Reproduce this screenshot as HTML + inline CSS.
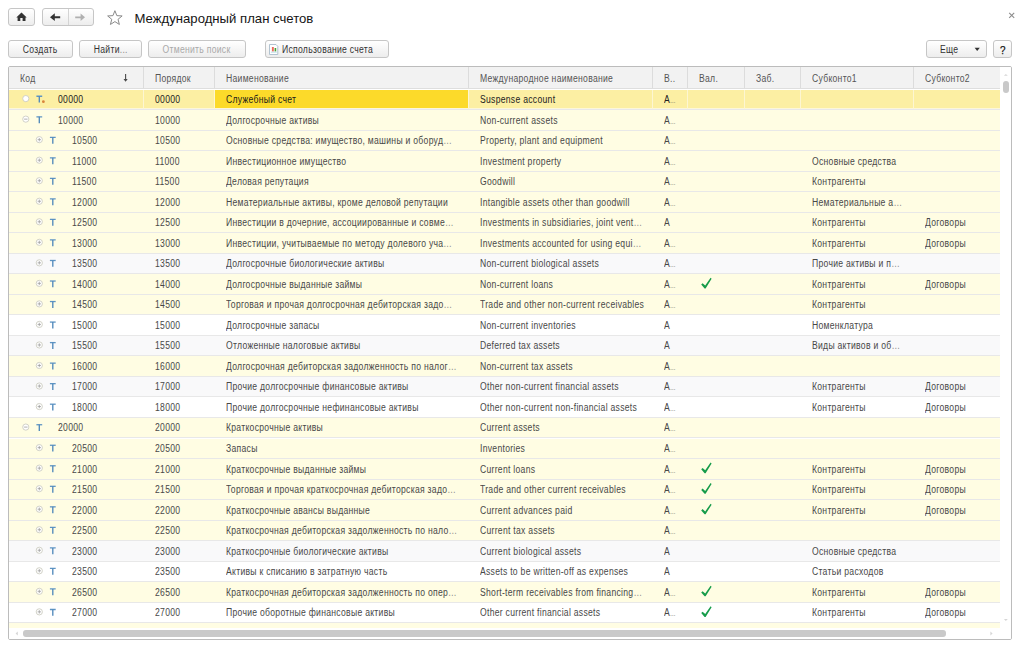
<!DOCTYPE html><html><head><meta charset="utf-8"><style>
*{box-sizing:border-box}
html,body{margin:0;padding:0}
body{width:1024px;height:648px;overflow:hidden;position:relative;background:#fff;font-family:"Liberation Sans",sans-serif;}
.a{position:absolute}
.t{position:absolute;white-space:nowrap;font-family:"Liberation Sans",sans-serif}
.t span{display:inline-block;transform:scaleX(0.86);transform-origin:0 0;letter-spacing:0.33px}
.e{font-style:normal;color:#8a8a8a}
.e2{font-style:normal;color:#555;font-size:6.5px;letter-spacing:-0.3px}
.btn{position:absolute;border:1px solid #c6c6c6;border-radius:3px;background:linear-gradient(#ffffff,#ededed);}
svg{position:absolute;left:0;top:0;overflow:visible}
</style></head><body>

<div class="btn" style="left:8px;top:8px;width:27px;height:18px"></div>
<div class="btn" style="left:42px;top:8px;width:52px;height:18px"></div>
<div class="a" style="left:68px;top:9px;width:1px;height:16px;background:#d4d4d4"></div>
<div class="btn" style="left:8px;top:40px;width:65px;height:18px"></div>
<div class="btn" style="left:79px;top:40px;width:63px;height:18px"></div>
<div class="btn" style="left:148px;top:40px;width:98px;height:18px"></div>
<div class="btn" style="left:265px;top:40px;width:124px;height:18px"></div>
<div class="btn" style="left:926px;top:40px;width:61px;height:18px"></div>
<div class="btn" style="left:993px;top:40px;width:19px;height:18px"></div>
<div class="t" style="left:8px;top:40.8px;width:65px;height:18px;line-height:18px;color:#333;font-size:10px;text-align:center"><span style="transform-origin:50% 0">Создать</span></div>
<div class="t" style="left:79px;top:40.8px;width:63px;height:18px;line-height:18px;color:#333;font-size:10px;text-align:center"><span style="transform-origin:50% 0">Найти<em class="e">...</em></span></div>
<div class="t" style="left:148px;top:40.8px;width:98px;height:18px;line-height:18px;color:#a9a9a9;font-size:10px;text-align:center"><span style="transform-origin:50% 0">Отменить поиск</span></div>
<div class="t" style="left:282.00px;top:40.80px;height:18.00px;line-height:18.00px;color:#333;font-size:10px;"><span>Использование счета</span></div>
<div class="t" style="left:939.50px;top:40.80px;height:18.00px;line-height:18.00px;color:#333;font-size:10px;"><span>Еще</span></div>
<div class="t" style="left:999.60px;top:40.50px;height:18.00px;line-height:18.00px;color:#111;font-size:11.5px;-webkit-text-stroke:0.25px #111"><span>?</span></div>
<svg width="1024" height="648"><path d="M16.3 17.6 L21.5 12.5 L26.7 17.6 L25.5 17.6 L25.5 21 L22.6 21 L22.6 18 L20.3 18 L20.3 21 L17.6 21 L17.6 17.6 Z" fill="#333"/><path d="M50 17.2 L54.8 13.3 L54.8 16.2 L60.2 16.2 L60.2 18.2 L54.8 18.2 L54.8 21 Z" fill="#333"/><path d="M85 17.3 L80.6 13.6 L80.6 16.4 L75.2 16.4 L75.2 18.2 L80.6 18.2 L80.6 21 Z" fill="#b0b0b0"/><polygon points="114.90,10.70 116.84,15.63 122.13,15.95 118.04,19.32 119.37,24.45 114.90,21.60 110.43,24.45 111.76,19.32 107.67,15.95 112.96,15.63" fill="none" stroke="#8a8a8a" stroke-width="1"/><path d="M1009.2 12.8 L1014.2 17.9 M1014.2 12.8 L1009.2 17.9" stroke="#8c8c8c" stroke-width="1.1"/><path d="M974.6 47.8 L979.8 47.8 L977.2 50.9 Z" fill="#333"/><path d="M269.5 44.5 L276 44.5 L277.8 46.3 L277.8 54.5 L269.5 54.5 Z" fill="#fff" stroke="#a9bccb" stroke-width="0.9"/><rect x="271.9" y="47" width="1.9" height="4.5" fill="#ec6a5c"/><rect x="274.6" y="48" width="1.6" height="3.5" fill="#4aa133"/><rect x="270.8" y="51.7" width="6" height="1" fill="#bfe0ea"/></svg>
<div class="t" style="left:134.5px;top:8.6px;height:20px;line-height:20px;color:#151515;font-size:13.15px"><span style="transform:none;letter-spacing:0">Международный план счетов</span></div>
<div class="a" style="left:8px;top:66px;width:1004px;height:574px;border:1px solid #bcbcbc;border-radius:2px;overflow:hidden;background:#fff">
<div class="a" style="left:0;top:0;width:991px;height:21px;background:#f2f2f2"></div>
<div class="a" style="left:0;top:21px;width:991px;height:1px;background:#dedede"></div>
<div class="a" style="left:134px;top:0;width:1px;height:21px;background:#dcdcdc"></div>
<div class="a" style="left:205px;top:0;width:1px;height:21px;background:#dcdcdc"></div>
<div class="a" style="left:459px;top:0;width:1px;height:21px;background:#dcdcdc"></div>
<div class="a" style="left:643px;top:0;width:1px;height:21px;background:#dcdcdc"></div>
<div class="a" style="left:678px;top:0;width:1px;height:21px;background:#dcdcdc"></div>
<div class="a" style="left:735px;top:0;width:1px;height:21px;background:#dcdcdc"></div>
<div class="a" style="left:791px;top:0;width:1px;height:21px;background:#dcdcdc"></div>
<div class="a" style="left:904px;top:0;width:1px;height:21px;background:#dcdcdc"></div>
<div class="t" style="left:11.00px;top:0.50px;height:21.00px;line-height:21.00px;color:#555555;font-size:10px;"><span>Код</span></div>
<div class="t" style="left:145.50px;top:0.50px;height:21.00px;line-height:21.00px;color:#555555;font-size:10px;"><span>Порядок</span></div>
<div class="t" style="left:216.50px;top:0.50px;height:21.00px;line-height:21.00px;color:#555555;font-size:10px;"><span>Наименование</span></div>
<div class="t" style="left:470.50px;top:0.50px;height:21.00px;line-height:21.00px;color:#555555;font-size:10px;"><span>Международное наименование</span></div>
<div class="t" style="left:654.50px;top:0.50px;height:21.00px;line-height:21.00px;color:#555555;font-size:10px;"><span>В..</span></div>
<div class="t" style="left:689.50px;top:0.50px;height:21.00px;line-height:21.00px;color:#555555;font-size:10px;"><span>Вал.</span></div>
<div class="t" style="left:746.50px;top:0.50px;height:21.00px;line-height:21.00px;color:#555555;font-size:10px;"><span>Заб.</span></div>
<div class="t" style="left:802.50px;top:0.50px;height:21.00px;line-height:21.00px;color:#555555;font-size:10px;"><span>Субконто1</span></div>
<div class="t" style="left:915.50px;top:0.50px;height:21.00px;line-height:21.00px;color:#555555;font-size:10px;"><span>Субконто2</span></div>
<svg width="1024" height="648"><rect x="116.05" y="7" width="1.1" height="5.3" fill="#4a4a4a"/><path d="M114.5 12.0 L118.7 12.0 L116.6 14.799999999999997 Z" fill="#4a4a4a"/></svg>
<div class="a" style="left:0;top:22.50px;width:991px;height:20.53px;background:#fcefa3;border-bottom:1px solid #e8e8e8"></div>
<div class="a" style="left:0;top:40.83px;width:991px;height:1.2px;background:#fdf7d8"></div>
<div class="a" style="left:205.60px;top:22.50px;width:253.40px;height:18.33px;background:#fcda2a"></div>
<div class="a" style="left:134px;top:22.50px;width:1px;height:19.53px;background:#fdf6d2"></div>
<div class="a" style="left:205px;top:22.50px;width:1px;height:19.53px;background:#fdf6d2"></div>
<div class="a" style="left:459px;top:22.50px;width:1px;height:19.53px;background:#fdf6d2"></div>
<div class="a" style="left:643px;top:22.50px;width:1px;height:19.53px;background:#fdf6d2"></div>
<div class="a" style="left:678px;top:22.50px;width:1px;height:19.53px;background:#fdf6d2"></div>
<div class="a" style="left:735px;top:22.50px;width:1px;height:19.53px;background:#fdf6d2"></div>
<div class="a" style="left:791px;top:22.50px;width:1px;height:19.53px;background:#fdf6d2"></div>
<div class="a" style="left:904px;top:22.50px;width:1px;height:19.53px;background:#fdf6d2"></div>
<svg width="1024" height="648"><circle cx="16.80" cy="31.60" r="3.1" fill="#fff" stroke="#cdcdc2" stroke-width="0.9"/><path d="M27.40 29.25 L33.20 29.25" stroke="#5f95c4" stroke-width="1.3"/><path d="M30.30 29.25 L30.30 35.60" stroke="#5089bb" stroke-width="1.35"/><circle cx="34.40" cy="34.70" r="1.4" fill="#d9843c"/></svg>
<div class="t" style="left:49.30px;top:23.00px;height:20.00px;line-height:20.00px;color:#222;font-size:10px;"><span>00000</span></div>
<div class="t" style="left:146.00px;top:23.00px;height:20.00px;line-height:20.00px;color:#222;font-size:10px;"><span>00000</span></div>
<div class="t" style="left:216.50px;top:23.00px;height:20.00px;line-height:20.00px;color:#1a1a1a;font-size:10px;"><span>Служебный счет</span></div>
<div class="t" style="left:470.50px;top:23.00px;height:20.00px;line-height:20.00px;color:#222;font-size:10px;"><span>Suspense account</span></div>
<div class="t" style="left:654.50px;top:23.00px;height:20.00px;line-height:20.00px;color:#222;font-size:10px;"><span>A<em class="e2">…</em></span></div>
<div class="a" style="left:0;top:43.03px;width:991px;height:20.53px;background:#fffde3;border-bottom:1px solid #e8e8e8"></div>
<svg width="1024" height="648"><circle cx="16.80" cy="52.13" r="3.1" fill="#fff" stroke="#cdcdc2" stroke-width="0.9"/><path d="M15.10 52.13 L18.50 52.13" stroke="#9a9a9a" stroke-width="0.8"/><path d="M27.40 49.78 L33.20 49.78" stroke="#5f95c4" stroke-width="1.3"/><path d="M30.30 49.78 L30.30 56.13" stroke="#5089bb" stroke-width="1.35"/></svg>
<div class="t" style="left:49.30px;top:43.53px;height:20.00px;line-height:20.00px;color:#484848;font-size:10px;"><span>10000</span></div>
<div class="t" style="left:146.00px;top:43.53px;height:20.00px;line-height:20.00px;color:#484848;font-size:10px;"><span>10000</span></div>
<div class="t" style="left:216.50px;top:43.53px;height:20.00px;line-height:20.00px;color:#484848;font-size:10px;"><span>Долгосрочные активы</span></div>
<div class="t" style="left:470.50px;top:43.53px;height:20.00px;line-height:20.00px;color:#484848;font-size:10px;"><span>Non-current assets</span></div>
<div class="t" style="left:654.50px;top:43.53px;height:20.00px;line-height:20.00px;color:#484848;font-size:10px;"><span>A<em class="e2">…</em></span></div>
<div class="a" style="left:0;top:63.56px;width:991px;height:20.53px;background:#fffde3;border-bottom:1px solid #e8e8e8"></div>
<svg width="1024" height="648"><circle cx="30.30" cy="72.66" r="3.1" fill="#fff" stroke="#cdcdc2" stroke-width="0.9"/><path d="M28.60 72.66 L32.00 72.66 M30.30 70.96 L30.30 74.36" stroke="#9a9a9a" stroke-width="0.75"/><path d="M40.90 70.31 L46.70 70.31" stroke="#5f95c4" stroke-width="1.3"/><path d="M43.80 70.31 L43.80 76.66" stroke="#5089bb" stroke-width="1.35"/></svg>
<div class="t" style="left:62.80px;top:64.06px;height:20.00px;line-height:20.00px;color:#484848;font-size:10px;"><span>10500</span></div>
<div class="t" style="left:146.00px;top:64.06px;height:20.00px;line-height:20.00px;color:#484848;font-size:10px;"><span>10500</span></div>
<div class="t" style="left:216.50px;top:64.06px;height:20.00px;line-height:20.00px;color:#484848;font-size:10px;"><span>Основные средства: имущество, машины и оборуд<em class="e">…</em></span></div>
<div class="t" style="left:470.50px;top:64.06px;height:20.00px;line-height:20.00px;color:#484848;font-size:10px;"><span>Property, plant and equipment</span></div>
<div class="t" style="left:654.50px;top:64.06px;height:20.00px;line-height:20.00px;color:#484848;font-size:10px;"><span>A<em class="e2">…</em></span></div>
<div class="a" style="left:0;top:84.09px;width:991px;height:20.53px;background:#fffde3;border-bottom:1px solid #e8e8e8"></div>
<svg width="1024" height="648"><circle cx="30.30" cy="93.19" r="3.1" fill="#fff" stroke="#cdcdc2" stroke-width="0.9"/><path d="M28.60 93.19 L32.00 93.19 M30.30 91.49 L30.30 94.89" stroke="#9a9a9a" stroke-width="0.75"/><path d="M40.90 90.84 L46.70 90.84" stroke="#5f95c4" stroke-width="1.3"/><path d="M43.80 90.84 L43.80 97.19" stroke="#5089bb" stroke-width="1.35"/></svg>
<div class="t" style="left:62.80px;top:84.59px;height:20.00px;line-height:20.00px;color:#484848;font-size:10px;"><span>11000</span></div>
<div class="t" style="left:146.00px;top:84.59px;height:20.00px;line-height:20.00px;color:#484848;font-size:10px;"><span>11000</span></div>
<div class="t" style="left:216.50px;top:84.59px;height:20.00px;line-height:20.00px;color:#484848;font-size:10px;"><span>Инвестиционное имущество</span></div>
<div class="t" style="left:470.50px;top:84.59px;height:20.00px;line-height:20.00px;color:#484848;font-size:10px;"><span>Investment property</span></div>
<div class="t" style="left:654.50px;top:84.59px;height:20.00px;line-height:20.00px;color:#484848;font-size:10px;"><span>A<em class="e2">…</em></span></div>
<div class="t" style="left:802.50px;top:84.59px;height:20.00px;line-height:20.00px;color:#484848;font-size:10px;"><span>Основные средства</span></div>
<div class="a" style="left:0;top:104.62px;width:991px;height:20.53px;background:#fffde3;border-bottom:1px solid #e8e8e8"></div>
<svg width="1024" height="648"><circle cx="30.30" cy="113.72" r="3.1" fill="#fff" stroke="#cdcdc2" stroke-width="0.9"/><path d="M28.60 113.72 L32.00 113.72 M30.30 112.02 L30.30 115.42" stroke="#9a9a9a" stroke-width="0.75"/><path d="M40.90 111.37 L46.70 111.37" stroke="#5f95c4" stroke-width="1.3"/><path d="M43.80 111.37 L43.80 117.72" stroke="#5089bb" stroke-width="1.35"/></svg>
<div class="t" style="left:62.80px;top:105.12px;height:20.00px;line-height:20.00px;color:#484848;font-size:10px;"><span>11500</span></div>
<div class="t" style="left:146.00px;top:105.12px;height:20.00px;line-height:20.00px;color:#484848;font-size:10px;"><span>11500</span></div>
<div class="t" style="left:216.50px;top:105.12px;height:20.00px;line-height:20.00px;color:#484848;font-size:10px;"><span>Деловая репутация</span></div>
<div class="t" style="left:470.50px;top:105.12px;height:20.00px;line-height:20.00px;color:#484848;font-size:10px;"><span>Goodwill</span></div>
<div class="t" style="left:654.50px;top:105.12px;height:20.00px;line-height:20.00px;color:#484848;font-size:10px;"><span>A<em class="e2">…</em></span></div>
<div class="t" style="left:802.50px;top:105.12px;height:20.00px;line-height:20.00px;color:#484848;font-size:10px;"><span>Контрагенты</span></div>
<div class="a" style="left:0;top:125.15px;width:991px;height:20.53px;background:#fffde3;border-bottom:1px solid #e8e8e8"></div>
<svg width="1024" height="648"><circle cx="30.30" cy="134.25" r="3.1" fill="#fff" stroke="#cdcdc2" stroke-width="0.9"/><path d="M28.60 134.25 L32.00 134.25 M30.30 132.55 L30.30 135.95" stroke="#9a9a9a" stroke-width="0.75"/><path d="M40.90 131.90 L46.70 131.90" stroke="#5f95c4" stroke-width="1.3"/><path d="M43.80 131.90 L43.80 138.25" stroke="#5089bb" stroke-width="1.35"/></svg>
<div class="t" style="left:62.80px;top:125.65px;height:20.00px;line-height:20.00px;color:#484848;font-size:10px;"><span>12000</span></div>
<div class="t" style="left:146.00px;top:125.65px;height:20.00px;line-height:20.00px;color:#484848;font-size:10px;"><span>12000</span></div>
<div class="t" style="left:216.50px;top:125.65px;height:20.00px;line-height:20.00px;color:#484848;font-size:10px;"><span>Нематериальные активы, кроме деловой репутации</span></div>
<div class="t" style="left:470.50px;top:125.65px;height:20.00px;line-height:20.00px;color:#484848;font-size:10px;"><span>Intangible assets other than goodwill</span></div>
<div class="t" style="left:654.50px;top:125.65px;height:20.00px;line-height:20.00px;color:#484848;font-size:10px;"><span>A<em class="e2">…</em></span></div>
<div class="t" style="left:802.50px;top:125.65px;height:20.00px;line-height:20.00px;color:#484848;font-size:10px;"><span>Нематериальные а<em class="e">…</em></span></div>
<div class="a" style="left:0;top:145.68px;width:991px;height:20.53px;background:#fffde3;border-bottom:1px solid #e8e8e8"></div>
<svg width="1024" height="648"><circle cx="30.30" cy="154.78" r="3.1" fill="#fff" stroke="#cdcdc2" stroke-width="0.9"/><path d="M28.60 154.78 L32.00 154.78 M30.30 153.08 L30.30 156.48" stroke="#9a9a9a" stroke-width="0.75"/><path d="M40.90 152.43 L46.70 152.43" stroke="#5f95c4" stroke-width="1.3"/><path d="M43.80 152.43 L43.80 158.78" stroke="#5089bb" stroke-width="1.35"/></svg>
<div class="t" style="left:62.80px;top:146.18px;height:20.00px;line-height:20.00px;color:#484848;font-size:10px;"><span>12500</span></div>
<div class="t" style="left:146.00px;top:146.18px;height:20.00px;line-height:20.00px;color:#484848;font-size:10px;"><span>12500</span></div>
<div class="t" style="left:216.50px;top:146.18px;height:20.00px;line-height:20.00px;color:#484848;font-size:10px;"><span>Инвестиции в дочерние, ассоциированные и совме<em class="e">…</em></span></div>
<div class="t" style="left:470.50px;top:146.18px;height:20.00px;line-height:20.00px;color:#484848;font-size:10px;"><span>Investments in subsidiaries, joint vent<em class="e">…</em></span></div>
<div class="t" style="left:654.50px;top:146.18px;height:20.00px;line-height:20.00px;color:#484848;font-size:10px;"><span>A</span></div>
<div class="t" style="left:802.50px;top:146.18px;height:20.00px;line-height:20.00px;color:#484848;font-size:10px;"><span>Контрагенты</span></div>
<div class="t" style="left:915.50px;top:146.18px;height:20.00px;line-height:20.00px;color:#484848;font-size:10px;"><span>Договоры</span></div>
<div class="a" style="left:0;top:166.21px;width:991px;height:20.53px;background:#fffde3;border-bottom:1px solid #e8e8e8"></div>
<svg width="1024" height="648"><circle cx="30.30" cy="175.31" r="3.1" fill="#fff" stroke="#cdcdc2" stroke-width="0.9"/><path d="M28.60 175.31 L32.00 175.31 M30.30 173.61 L30.30 177.01" stroke="#9a9a9a" stroke-width="0.75"/><path d="M40.90 172.96 L46.70 172.96" stroke="#5f95c4" stroke-width="1.3"/><path d="M43.80 172.96 L43.80 179.31" stroke="#5089bb" stroke-width="1.35"/></svg>
<div class="t" style="left:62.80px;top:166.71px;height:20.00px;line-height:20.00px;color:#484848;font-size:10px;"><span>13000</span></div>
<div class="t" style="left:146.00px;top:166.71px;height:20.00px;line-height:20.00px;color:#484848;font-size:10px;"><span>13000</span></div>
<div class="t" style="left:216.50px;top:166.71px;height:20.00px;line-height:20.00px;color:#484848;font-size:10px;"><span>Инвестиции, учитываемые по методу долевого уча<em class="e">…</em></span></div>
<div class="t" style="left:470.50px;top:166.71px;height:20.00px;line-height:20.00px;color:#484848;font-size:10px;"><span>Investments accounted for using equi<em class="e">…</em></span></div>
<div class="t" style="left:654.50px;top:166.71px;height:20.00px;line-height:20.00px;color:#484848;font-size:10px;"><span>A<em class="e2">…</em></span></div>
<div class="t" style="left:802.50px;top:166.71px;height:20.00px;line-height:20.00px;color:#484848;font-size:10px;"><span>Контрагенты</span></div>
<div class="t" style="left:915.50px;top:166.71px;height:20.00px;line-height:20.00px;color:#484848;font-size:10px;"><span>Договоры</span></div>
<div class="a" style="left:0;top:186.74px;width:991px;height:20.53px;background:#f9f9fa;border-bottom:1px solid #e8e8e8"></div>
<svg width="1024" height="648"><circle cx="30.30" cy="195.84" r="3.1" fill="#fff" stroke="#cdcdc2" stroke-width="0.9"/><path d="M28.60 195.84 L32.00 195.84 M30.30 194.14 L30.30 197.54" stroke="#9a9a9a" stroke-width="0.75"/><path d="M40.90 193.49 L46.70 193.49" stroke="#5f95c4" stroke-width="1.3"/><path d="M43.80 193.49 L43.80 199.84" stroke="#5089bb" stroke-width="1.35"/></svg>
<div class="t" style="left:62.80px;top:187.24px;height:20.00px;line-height:20.00px;color:#484848;font-size:10px;"><span>13500</span></div>
<div class="t" style="left:146.00px;top:187.24px;height:20.00px;line-height:20.00px;color:#484848;font-size:10px;"><span>13500</span></div>
<div class="t" style="left:216.50px;top:187.24px;height:20.00px;line-height:20.00px;color:#484848;font-size:10px;"><span>Долгосрочные биологические активы</span></div>
<div class="t" style="left:470.50px;top:187.24px;height:20.00px;line-height:20.00px;color:#484848;font-size:10px;"><span>Non-current biological assets</span></div>
<div class="t" style="left:654.50px;top:187.24px;height:20.00px;line-height:20.00px;color:#484848;font-size:10px;"><span>A<em class="e2">…</em></span></div>
<div class="t" style="left:802.50px;top:187.24px;height:20.00px;line-height:20.00px;color:#484848;font-size:10px;"><span>Прочие активы и п<em class="e">…</em></span></div>
<div class="a" style="left:0;top:207.27px;width:991px;height:20.53px;background:#fffde3;border-bottom:1px solid #e8e8e8"></div>
<svg width="1024" height="648"><circle cx="30.30" cy="216.37" r="3.1" fill="#fff" stroke="#cdcdc2" stroke-width="0.9"/><path d="M28.60 216.37 L32.00 216.37 M30.30 214.67 L30.30 218.07" stroke="#9a9a9a" stroke-width="0.75"/><path d="M40.90 214.02 L46.70 214.02" stroke="#5f95c4" stroke-width="1.3"/><path d="M43.80 214.02 L43.80 220.37" stroke="#5089bb" stroke-width="1.35"/></svg>
<div class="t" style="left:62.80px;top:207.77px;height:20.00px;line-height:20.00px;color:#484848;font-size:10px;"><span>14000</span></div>
<div class="t" style="left:146.00px;top:207.77px;height:20.00px;line-height:20.00px;color:#484848;font-size:10px;"><span>14000</span></div>
<div class="t" style="left:216.50px;top:207.77px;height:20.00px;line-height:20.00px;color:#484848;font-size:10px;"><span>Долгосрочные выданные займы</span></div>
<div class="t" style="left:470.50px;top:207.77px;height:20.00px;line-height:20.00px;color:#484848;font-size:10px;"><span>Non-current loans</span></div>
<div class="t" style="left:654.50px;top:207.77px;height:20.00px;line-height:20.00px;color:#484848;font-size:10px;"><span>A<em class="e2">…</em></span></div>
<svg width="1024" height="648"><polygon points="692.20,217.60 693.60,216.20 696.20,218.60 701.60,210.80 702.60,211.80 696.60,221.40 695.60,221.40" fill="#169c4a"/></svg>
<div class="t" style="left:802.50px;top:207.77px;height:20.00px;line-height:20.00px;color:#484848;font-size:10px;"><span>Контрагенты</span></div>
<div class="t" style="left:915.50px;top:207.77px;height:20.00px;line-height:20.00px;color:#484848;font-size:10px;"><span>Договоры</span></div>
<div class="a" style="left:0;top:227.80px;width:991px;height:20.53px;background:#fffde3;border-bottom:1px solid #e8e8e8"></div>
<svg width="1024" height="648"><circle cx="30.30" cy="236.90" r="3.1" fill="#fff" stroke="#cdcdc2" stroke-width="0.9"/><path d="M28.60 236.90 L32.00 236.90 M30.30 235.20 L30.30 238.60" stroke="#9a9a9a" stroke-width="0.75"/><path d="M40.90 234.55 L46.70 234.55" stroke="#5f95c4" stroke-width="1.3"/><path d="M43.80 234.55 L43.80 240.90" stroke="#5089bb" stroke-width="1.35"/></svg>
<div class="t" style="left:62.80px;top:228.30px;height:20.00px;line-height:20.00px;color:#484848;font-size:10px;"><span>14500</span></div>
<div class="t" style="left:146.00px;top:228.30px;height:20.00px;line-height:20.00px;color:#484848;font-size:10px;"><span>14500</span></div>
<div class="t" style="left:216.50px;top:228.30px;height:20.00px;line-height:20.00px;color:#484848;font-size:10px;"><span>Торговая и прочая долгосрочная дебиторская задо<em class="e">…</em></span></div>
<div class="t" style="left:470.50px;top:228.30px;height:20.00px;line-height:20.00px;color:#484848;font-size:10px;"><span>Trade and other non-current receivables</span></div>
<div class="t" style="left:654.50px;top:228.30px;height:20.00px;line-height:20.00px;color:#484848;font-size:10px;"><span>A<em class="e2">…</em></span></div>
<div class="t" style="left:802.50px;top:228.30px;height:20.00px;line-height:20.00px;color:#484848;font-size:10px;"><span>Контрагенты</span></div>
<div class="a" style="left:0;top:248.33px;width:991px;height:20.53px;background:#ffffff;border-bottom:1px solid #e8e8e8"></div>
<svg width="1024" height="648"><circle cx="30.30" cy="257.43" r="3.1" fill="#fff" stroke="#cdcdc2" stroke-width="0.9"/><path d="M28.60 257.43 L32.00 257.43 M30.30 255.73 L30.30 259.13" stroke="#9a9a9a" stroke-width="0.75"/><path d="M40.90 255.08 L46.70 255.08" stroke="#5f95c4" stroke-width="1.3"/><path d="M43.80 255.08 L43.80 261.43" stroke="#5089bb" stroke-width="1.35"/></svg>
<div class="t" style="left:62.80px;top:248.83px;height:20.00px;line-height:20.00px;color:#484848;font-size:10px;"><span>15000</span></div>
<div class="t" style="left:146.00px;top:248.83px;height:20.00px;line-height:20.00px;color:#484848;font-size:10px;"><span>15000</span></div>
<div class="t" style="left:216.50px;top:248.83px;height:20.00px;line-height:20.00px;color:#484848;font-size:10px;"><span>Долгосрочные запасы</span></div>
<div class="t" style="left:470.50px;top:248.83px;height:20.00px;line-height:20.00px;color:#484848;font-size:10px;"><span>Non-current inventories</span></div>
<div class="t" style="left:654.50px;top:248.83px;height:20.00px;line-height:20.00px;color:#484848;font-size:10px;"><span>A</span></div>
<div class="t" style="left:802.50px;top:248.83px;height:20.00px;line-height:20.00px;color:#484848;font-size:10px;"><span>Номенклатура</span></div>
<div class="a" style="left:0;top:268.86px;width:991px;height:20.53px;background:#f9f9fa;border-bottom:1px solid #e8e8e8"></div>
<svg width="1024" height="648"><circle cx="30.30" cy="277.96" r="3.1" fill="#fff" stroke="#cdcdc2" stroke-width="0.9"/><path d="M28.60 277.96 L32.00 277.96 M30.30 276.26 L30.30 279.66" stroke="#9a9a9a" stroke-width="0.75"/><path d="M40.90 275.61 L46.70 275.61" stroke="#5f95c4" stroke-width="1.3"/><path d="M43.80 275.61 L43.80 281.96" stroke="#5089bb" stroke-width="1.35"/></svg>
<div class="t" style="left:62.80px;top:269.36px;height:20.00px;line-height:20.00px;color:#484848;font-size:10px;"><span>15500</span></div>
<div class="t" style="left:146.00px;top:269.36px;height:20.00px;line-height:20.00px;color:#484848;font-size:10px;"><span>15500</span></div>
<div class="t" style="left:216.50px;top:269.36px;height:20.00px;line-height:20.00px;color:#484848;font-size:10px;"><span>Отложенные налоговые активы</span></div>
<div class="t" style="left:470.50px;top:269.36px;height:20.00px;line-height:20.00px;color:#484848;font-size:10px;"><span>Deferred tax assets</span></div>
<div class="t" style="left:654.50px;top:269.36px;height:20.00px;line-height:20.00px;color:#484848;font-size:10px;"><span>A</span></div>
<div class="t" style="left:802.50px;top:269.36px;height:20.00px;line-height:20.00px;color:#484848;font-size:10px;"><span>Виды активов и об<em class="e">…</em></span></div>
<div class="a" style="left:0;top:289.39px;width:991px;height:20.53px;background:#fffde3;border-bottom:1px solid #e8e8e8"></div>
<svg width="1024" height="648"><circle cx="30.30" cy="298.49" r="3.1" fill="#fff" stroke="#cdcdc2" stroke-width="0.9"/><path d="M28.60 298.49 L32.00 298.49 M30.30 296.79 L30.30 300.19" stroke="#9a9a9a" stroke-width="0.75"/><path d="M40.90 296.14 L46.70 296.14" stroke="#5f95c4" stroke-width="1.3"/><path d="M43.80 296.14 L43.80 302.49" stroke="#5089bb" stroke-width="1.35"/></svg>
<div class="t" style="left:62.80px;top:289.89px;height:20.00px;line-height:20.00px;color:#484848;font-size:10px;"><span>16000</span></div>
<div class="t" style="left:146.00px;top:289.89px;height:20.00px;line-height:20.00px;color:#484848;font-size:10px;"><span>16000</span></div>
<div class="t" style="left:216.50px;top:289.89px;height:20.00px;line-height:20.00px;color:#484848;font-size:10px;"><span>Долгосрочная дебиторская задолженность по налог<em class="e">…</em></span></div>
<div class="t" style="left:470.50px;top:289.89px;height:20.00px;line-height:20.00px;color:#484848;font-size:10px;"><span>Non-current tax assets</span></div>
<div class="t" style="left:654.50px;top:289.89px;height:20.00px;line-height:20.00px;color:#484848;font-size:10px;"><span>A<em class="e2">…</em></span></div>
<div class="a" style="left:0;top:309.92px;width:991px;height:20.53px;background:#f9f9fa;border-bottom:1px solid #e8e8e8"></div>
<svg width="1024" height="648"><circle cx="30.30" cy="319.02" r="3.1" fill="#fff" stroke="#cdcdc2" stroke-width="0.9"/><path d="M28.60 319.02 L32.00 319.02 M30.30 317.32 L30.30 320.72" stroke="#9a9a9a" stroke-width="0.75"/><path d="M40.90 316.67 L46.70 316.67" stroke="#5f95c4" stroke-width="1.3"/><path d="M43.80 316.67 L43.80 323.02" stroke="#5089bb" stroke-width="1.35"/></svg>
<div class="t" style="left:62.80px;top:310.42px;height:20.00px;line-height:20.00px;color:#484848;font-size:10px;"><span>17000</span></div>
<div class="t" style="left:146.00px;top:310.42px;height:20.00px;line-height:20.00px;color:#484848;font-size:10px;"><span>17000</span></div>
<div class="t" style="left:216.50px;top:310.42px;height:20.00px;line-height:20.00px;color:#484848;font-size:10px;"><span>Прочие долгосрочные финансовые активы</span></div>
<div class="t" style="left:470.50px;top:310.42px;height:20.00px;line-height:20.00px;color:#484848;font-size:10px;"><span>Other non-current financial assets</span></div>
<div class="t" style="left:654.50px;top:310.42px;height:20.00px;line-height:20.00px;color:#484848;font-size:10px;"><span>A<em class="e2">…</em></span></div>
<div class="t" style="left:802.50px;top:310.42px;height:20.00px;line-height:20.00px;color:#484848;font-size:10px;"><span>Контрагенты</span></div>
<div class="t" style="left:915.50px;top:310.42px;height:20.00px;line-height:20.00px;color:#484848;font-size:10px;"><span>Договоры</span></div>
<div class="a" style="left:0;top:330.45px;width:991px;height:20.53px;background:#ffffff;border-bottom:1px solid #e8e8e8"></div>
<svg width="1024" height="648"><circle cx="30.30" cy="339.55" r="3.1" fill="#fff" stroke="#cdcdc2" stroke-width="0.9"/><path d="M28.60 339.55 L32.00 339.55 M30.30 337.85 L30.30 341.25" stroke="#9a9a9a" stroke-width="0.75"/><path d="M40.90 337.20 L46.70 337.20" stroke="#5f95c4" stroke-width="1.3"/><path d="M43.80 337.20 L43.80 343.55" stroke="#5089bb" stroke-width="1.35"/></svg>
<div class="t" style="left:62.80px;top:330.95px;height:20.00px;line-height:20.00px;color:#484848;font-size:10px;"><span>18000</span></div>
<div class="t" style="left:146.00px;top:330.95px;height:20.00px;line-height:20.00px;color:#484848;font-size:10px;"><span>18000</span></div>
<div class="t" style="left:216.50px;top:330.95px;height:20.00px;line-height:20.00px;color:#484848;font-size:10px;"><span>Прочие долгосрочные нефинансовые активы</span></div>
<div class="t" style="left:470.50px;top:330.95px;height:20.00px;line-height:20.00px;color:#484848;font-size:10px;"><span>Other non-current non-financial assets</span></div>
<div class="t" style="left:654.50px;top:330.95px;height:20.00px;line-height:20.00px;color:#484848;font-size:10px;"><span>A<em class="e2">…</em></span></div>
<div class="t" style="left:802.50px;top:330.95px;height:20.00px;line-height:20.00px;color:#484848;font-size:10px;"><span>Контрагенты</span></div>
<div class="t" style="left:915.50px;top:330.95px;height:20.00px;line-height:20.00px;color:#484848;font-size:10px;"><span>Договоры</span></div>
<div class="a" style="left:0;top:350.98px;width:991px;height:20.53px;background:#fffde3;border-bottom:1px solid #e8e8e8"></div>
<svg width="1024" height="648"><circle cx="16.80" cy="360.08" r="3.1" fill="#fff" stroke="#cdcdc2" stroke-width="0.9"/><path d="M15.10 360.08 L18.50 360.08" stroke="#9a9a9a" stroke-width="0.8"/><path d="M27.40 357.73 L33.20 357.73" stroke="#5f95c4" stroke-width="1.3"/><path d="M30.30 357.73 L30.30 364.08" stroke="#5089bb" stroke-width="1.35"/></svg>
<div class="t" style="left:49.30px;top:351.48px;height:20.00px;line-height:20.00px;color:#484848;font-size:10px;"><span>20000</span></div>
<div class="t" style="left:146.00px;top:351.48px;height:20.00px;line-height:20.00px;color:#484848;font-size:10px;"><span>20000</span></div>
<div class="t" style="left:216.50px;top:351.48px;height:20.00px;line-height:20.00px;color:#484848;font-size:10px;"><span>Краткосрочные активы</span></div>
<div class="t" style="left:470.50px;top:351.48px;height:20.00px;line-height:20.00px;color:#484848;font-size:10px;"><span>Current assets</span></div>
<div class="t" style="left:654.50px;top:351.48px;height:20.00px;line-height:20.00px;color:#484848;font-size:10px;"><span>A<em class="e2">…</em></span></div>
<div class="a" style="left:0;top:371.51px;width:991px;height:20.53px;background:#fffde3;border-bottom:1px solid #e8e8e8"></div>
<svg width="1024" height="648"><circle cx="30.30" cy="380.61" r="3.1" fill="#fff" stroke="#cdcdc2" stroke-width="0.9"/><path d="M28.60 380.61 L32.00 380.61 M30.30 378.91 L30.30 382.31" stroke="#9a9a9a" stroke-width="0.75"/><path d="M40.90 378.26 L46.70 378.26" stroke="#5f95c4" stroke-width="1.3"/><path d="M43.80 378.26 L43.80 384.61" stroke="#5089bb" stroke-width="1.35"/></svg>
<div class="t" style="left:62.80px;top:372.01px;height:20.00px;line-height:20.00px;color:#484848;font-size:10px;"><span>20500</span></div>
<div class="t" style="left:146.00px;top:372.01px;height:20.00px;line-height:20.00px;color:#484848;font-size:10px;"><span>20500</span></div>
<div class="t" style="left:216.50px;top:372.01px;height:20.00px;line-height:20.00px;color:#484848;font-size:10px;"><span>Запасы</span></div>
<div class="t" style="left:470.50px;top:372.01px;height:20.00px;line-height:20.00px;color:#484848;font-size:10px;"><span>Inventories</span></div>
<div class="t" style="left:654.50px;top:372.01px;height:20.00px;line-height:20.00px;color:#484848;font-size:10px;"><span>A<em class="e2">…</em></span></div>
<div class="a" style="left:0;top:392.04px;width:991px;height:20.53px;background:#fffde3;border-bottom:1px solid #e8e8e8"></div>
<svg width="1024" height="648"><circle cx="30.30" cy="401.14" r="3.1" fill="#fff" stroke="#cdcdc2" stroke-width="0.9"/><path d="M28.60 401.14 L32.00 401.14 M30.30 399.44 L30.30 402.84" stroke="#9a9a9a" stroke-width="0.75"/><path d="M40.90 398.79 L46.70 398.79" stroke="#5f95c4" stroke-width="1.3"/><path d="M43.80 398.79 L43.80 405.14" stroke="#5089bb" stroke-width="1.35"/></svg>
<div class="t" style="left:62.80px;top:392.54px;height:20.00px;line-height:20.00px;color:#484848;font-size:10px;"><span>21000</span></div>
<div class="t" style="left:146.00px;top:392.54px;height:20.00px;line-height:20.00px;color:#484848;font-size:10px;"><span>21000</span></div>
<div class="t" style="left:216.50px;top:392.54px;height:20.00px;line-height:20.00px;color:#484848;font-size:10px;"><span>Краткосрочные выданные займы</span></div>
<div class="t" style="left:470.50px;top:392.54px;height:20.00px;line-height:20.00px;color:#484848;font-size:10px;"><span>Current loans</span></div>
<div class="t" style="left:654.50px;top:392.54px;height:20.00px;line-height:20.00px;color:#484848;font-size:10px;"><span>A<em class="e2">…</em></span></div>
<svg width="1024" height="648"><polygon points="692.20,402.37 693.60,400.97 696.20,403.37 701.60,395.57 702.60,396.57 696.60,406.17 695.60,406.17" fill="#169c4a"/></svg>
<div class="t" style="left:802.50px;top:392.54px;height:20.00px;line-height:20.00px;color:#484848;font-size:10px;"><span>Контрагенты</span></div>
<div class="t" style="left:915.50px;top:392.54px;height:20.00px;line-height:20.00px;color:#484848;font-size:10px;"><span>Договоры</span></div>
<div class="a" style="left:0;top:412.57px;width:991px;height:20.53px;background:#fffde3;border-bottom:1px solid #e8e8e8"></div>
<svg width="1024" height="648"><circle cx="30.30" cy="421.67" r="3.1" fill="#fff" stroke="#cdcdc2" stroke-width="0.9"/><path d="M28.60 421.67 L32.00 421.67 M30.30 419.97 L30.30 423.37" stroke="#9a9a9a" stroke-width="0.75"/><path d="M40.90 419.32 L46.70 419.32" stroke="#5f95c4" stroke-width="1.3"/><path d="M43.80 419.32 L43.80 425.67" stroke="#5089bb" stroke-width="1.35"/></svg>
<div class="t" style="left:62.80px;top:413.07px;height:20.00px;line-height:20.00px;color:#484848;font-size:10px;"><span>21500</span></div>
<div class="t" style="left:146.00px;top:413.07px;height:20.00px;line-height:20.00px;color:#484848;font-size:10px;"><span>21500</span></div>
<div class="t" style="left:216.50px;top:413.07px;height:20.00px;line-height:20.00px;color:#484848;font-size:10px;"><span>Торговая и прочая краткосрочная дебиторская задо<em class="e">…</em></span></div>
<div class="t" style="left:470.50px;top:413.07px;height:20.00px;line-height:20.00px;color:#484848;font-size:10px;"><span>Trade and other current receivables</span></div>
<div class="t" style="left:654.50px;top:413.07px;height:20.00px;line-height:20.00px;color:#484848;font-size:10px;"><span>A<em class="e2">…</em></span></div>
<svg width="1024" height="648"><polygon points="692.20,422.90 693.60,421.50 696.20,423.90 701.60,416.10 702.60,417.10 696.60,426.70 695.60,426.70" fill="#169c4a"/></svg>
<div class="t" style="left:802.50px;top:413.07px;height:20.00px;line-height:20.00px;color:#484848;font-size:10px;"><span>Контрагенты</span></div>
<div class="t" style="left:915.50px;top:413.07px;height:20.00px;line-height:20.00px;color:#484848;font-size:10px;"><span>Договоры</span></div>
<div class="a" style="left:0;top:433.10px;width:991px;height:20.53px;background:#fffde3;border-bottom:1px solid #e8e8e8"></div>
<svg width="1024" height="648"><circle cx="30.30" cy="442.20" r="3.1" fill="#fff" stroke="#cdcdc2" stroke-width="0.9"/><path d="M28.60 442.20 L32.00 442.20 M30.30 440.50 L30.30 443.90" stroke="#9a9a9a" stroke-width="0.75"/><path d="M40.90 439.85 L46.70 439.85" stroke="#5f95c4" stroke-width="1.3"/><path d="M43.80 439.85 L43.80 446.20" stroke="#5089bb" stroke-width="1.35"/></svg>
<div class="t" style="left:62.80px;top:433.60px;height:20.00px;line-height:20.00px;color:#484848;font-size:10px;"><span>22000</span></div>
<div class="t" style="left:146.00px;top:433.60px;height:20.00px;line-height:20.00px;color:#484848;font-size:10px;"><span>22000</span></div>
<div class="t" style="left:216.50px;top:433.60px;height:20.00px;line-height:20.00px;color:#484848;font-size:10px;"><span>Краткосрочные авансы выданные</span></div>
<div class="t" style="left:470.50px;top:433.60px;height:20.00px;line-height:20.00px;color:#484848;font-size:10px;"><span>Current advances paid</span></div>
<div class="t" style="left:654.50px;top:433.60px;height:20.00px;line-height:20.00px;color:#484848;font-size:10px;"><span>A<em class="e2">…</em></span></div>
<svg width="1024" height="648"><polygon points="692.20,443.43 693.60,442.03 696.20,444.43 701.60,436.63 702.60,437.63 696.60,447.23 695.60,447.23" fill="#169c4a"/></svg>
<div class="t" style="left:802.50px;top:433.60px;height:20.00px;line-height:20.00px;color:#484848;font-size:10px;"><span>Контрагенты</span></div>
<div class="t" style="left:915.50px;top:433.60px;height:20.00px;line-height:20.00px;color:#484848;font-size:10px;"><span>Договоры</span></div>
<div class="a" style="left:0;top:453.63px;width:991px;height:20.53px;background:#fffde3;border-bottom:1px solid #e8e8e8"></div>
<svg width="1024" height="648"><circle cx="30.30" cy="462.73" r="3.1" fill="#fff" stroke="#cdcdc2" stroke-width="0.9"/><path d="M28.60 462.73 L32.00 462.73 M30.30 461.03 L30.30 464.43" stroke="#9a9a9a" stroke-width="0.75"/><path d="M40.90 460.38 L46.70 460.38" stroke="#5f95c4" stroke-width="1.3"/><path d="M43.80 460.38 L43.80 466.73" stroke="#5089bb" stroke-width="1.35"/></svg>
<div class="t" style="left:62.80px;top:454.13px;height:20.00px;line-height:20.00px;color:#484848;font-size:10px;"><span>22500</span></div>
<div class="t" style="left:146.00px;top:454.13px;height:20.00px;line-height:20.00px;color:#484848;font-size:10px;"><span>22500</span></div>
<div class="t" style="left:216.50px;top:454.13px;height:20.00px;line-height:20.00px;color:#484848;font-size:10px;"><span>Краткосрочная дебиторская задолженность по нало<em class="e">…</em></span></div>
<div class="t" style="left:470.50px;top:454.13px;height:20.00px;line-height:20.00px;color:#484848;font-size:10px;"><span>Current tax assets</span></div>
<div class="t" style="left:654.50px;top:454.13px;height:20.00px;line-height:20.00px;color:#484848;font-size:10px;"><span>A<em class="e2">…</em></span></div>
<div class="a" style="left:0;top:474.16px;width:991px;height:20.53px;background:#f9f9fa;border-bottom:1px solid #e8e8e8"></div>
<svg width="1024" height="648"><circle cx="30.30" cy="483.26" r="3.1" fill="#fff" stroke="#cdcdc2" stroke-width="0.9"/><path d="M28.60 483.26 L32.00 483.26 M30.30 481.56 L30.30 484.96" stroke="#9a9a9a" stroke-width="0.75"/><path d="M40.90 480.91 L46.70 480.91" stroke="#5f95c4" stroke-width="1.3"/><path d="M43.80 480.91 L43.80 487.26" stroke="#5089bb" stroke-width="1.35"/></svg>
<div class="t" style="left:62.80px;top:474.66px;height:20.00px;line-height:20.00px;color:#484848;font-size:10px;"><span>23000</span></div>
<div class="t" style="left:146.00px;top:474.66px;height:20.00px;line-height:20.00px;color:#484848;font-size:10px;"><span>23000</span></div>
<div class="t" style="left:216.50px;top:474.66px;height:20.00px;line-height:20.00px;color:#484848;font-size:10px;"><span>Краткосрочные биологические активы</span></div>
<div class="t" style="left:470.50px;top:474.66px;height:20.00px;line-height:20.00px;color:#484848;font-size:10px;"><span>Current biological assets</span></div>
<div class="t" style="left:654.50px;top:474.66px;height:20.00px;line-height:20.00px;color:#484848;font-size:10px;"><span>A</span></div>
<div class="t" style="left:802.50px;top:474.66px;height:20.00px;line-height:20.00px;color:#484848;font-size:10px;"><span>Основные средства</span></div>
<div class="a" style="left:0;top:494.69px;width:991px;height:20.53px;background:#ffffff;border-bottom:1px solid #e8e8e8"></div>
<svg width="1024" height="648"><circle cx="30.30" cy="503.79" r="3.1" fill="#fff" stroke="#cdcdc2" stroke-width="0.9"/><path d="M28.60 503.79 L32.00 503.79 M30.30 502.09 L30.30 505.49" stroke="#9a9a9a" stroke-width="0.75"/><path d="M40.90 501.44 L46.70 501.44" stroke="#5f95c4" stroke-width="1.3"/><path d="M43.80 501.44 L43.80 507.79" stroke="#5089bb" stroke-width="1.35"/></svg>
<div class="t" style="left:62.80px;top:495.19px;height:20.00px;line-height:20.00px;color:#484848;font-size:10px;"><span>23500</span></div>
<div class="t" style="left:146.00px;top:495.19px;height:20.00px;line-height:20.00px;color:#484848;font-size:10px;"><span>23500</span></div>
<div class="t" style="left:216.50px;top:495.19px;height:20.00px;line-height:20.00px;color:#484848;font-size:10px;"><span>Активы к списанию в затратную часть</span></div>
<div class="t" style="left:470.50px;top:495.19px;height:20.00px;line-height:20.00px;color:#484848;font-size:10px;"><span>Assets to be written-off as expenses</span></div>
<div class="t" style="left:654.50px;top:495.19px;height:20.00px;line-height:20.00px;color:#484848;font-size:10px;"><span>A</span></div>
<div class="t" style="left:802.50px;top:495.19px;height:20.00px;line-height:20.00px;color:#484848;font-size:10px;"><span>Статьи расходов</span></div>
<div class="a" style="left:0;top:515.22px;width:991px;height:20.53px;background:#fffde3;border-bottom:1px solid #e8e8e8"></div>
<svg width="1024" height="648"><circle cx="30.30" cy="524.32" r="3.1" fill="#fff" stroke="#cdcdc2" stroke-width="0.9"/><path d="M28.60 524.32 L32.00 524.32 M30.30 522.62 L30.30 526.02" stroke="#9a9a9a" stroke-width="0.75"/><path d="M40.90 521.97 L46.70 521.97" stroke="#5f95c4" stroke-width="1.3"/><path d="M43.80 521.97 L43.80 528.32" stroke="#5089bb" stroke-width="1.35"/></svg>
<div class="t" style="left:62.80px;top:515.72px;height:20.00px;line-height:20.00px;color:#484848;font-size:10px;"><span>26500</span></div>
<div class="t" style="left:146.00px;top:515.72px;height:20.00px;line-height:20.00px;color:#484848;font-size:10px;"><span>26500</span></div>
<div class="t" style="left:216.50px;top:515.72px;height:20.00px;line-height:20.00px;color:#484848;font-size:10px;"><span>Краткосрочная дебиторская задолженность по опер<em class="e">…</em></span></div>
<div class="t" style="left:470.50px;top:515.72px;height:20.00px;line-height:20.00px;color:#484848;font-size:10px;"><span>Short-term receivables from financing<em class="e">…</em></span></div>
<div class="t" style="left:654.50px;top:515.72px;height:20.00px;line-height:20.00px;color:#484848;font-size:10px;"><span>A<em class="e2">…</em></span></div>
<svg width="1024" height="648"><polygon points="692.20,525.55 693.60,524.15 696.20,526.55 701.60,518.75 702.60,519.75 696.60,529.35 695.60,529.35" fill="#169c4a"/></svg>
<div class="t" style="left:802.50px;top:515.72px;height:20.00px;line-height:20.00px;color:#484848;font-size:10px;"><span>Контрагенты</span></div>
<div class="t" style="left:915.50px;top:515.72px;height:20.00px;line-height:20.00px;color:#484848;font-size:10px;"><span>Договоры</span></div>
<div class="a" style="left:0;top:535.75px;width:991px;height:20.53px;background:#ffffff;border-bottom:1px solid #e8e8e8"></div>
<svg width="1024" height="648"><circle cx="30.30" cy="544.85" r="3.1" fill="#fff" stroke="#cdcdc2" stroke-width="0.9"/><path d="M28.60 544.85 L32.00 544.85 M30.30 543.15 L30.30 546.55" stroke="#9a9a9a" stroke-width="0.75"/><path d="M40.90 542.50 L46.70 542.50" stroke="#5f95c4" stroke-width="1.3"/><path d="M43.80 542.50 L43.80 548.85" stroke="#5089bb" stroke-width="1.35"/></svg>
<div class="t" style="left:62.80px;top:536.25px;height:20.00px;line-height:20.00px;color:#484848;font-size:10px;"><span>27000</span></div>
<div class="t" style="left:146.00px;top:536.25px;height:20.00px;line-height:20.00px;color:#484848;font-size:10px;"><span>27000</span></div>
<div class="t" style="left:216.50px;top:536.25px;height:20.00px;line-height:20.00px;color:#484848;font-size:10px;"><span>Прочие оборотные финансовые активы</span></div>
<div class="t" style="left:470.50px;top:536.25px;height:20.00px;line-height:20.00px;color:#484848;font-size:10px;"><span>Other current financial assets</span></div>
<div class="t" style="left:654.50px;top:536.25px;height:20.00px;line-height:20.00px;color:#484848;font-size:10px;"><span>A<em class="e2">…</em></span></div>
<svg width="1024" height="648"><polygon points="692.20,546.08 693.60,544.68 696.20,547.08 701.60,539.28 702.60,540.28 696.60,549.88 695.60,549.88" fill="#169c4a"/></svg>
<div class="t" style="left:802.50px;top:536.25px;height:20.00px;line-height:20.00px;color:#484848;font-size:10px;"><span>Контрагенты</span></div>
<div class="t" style="left:915.50px;top:536.25px;height:20.00px;line-height:20.00px;color:#484848;font-size:10px;"><span>Договоры</span></div>
<div class="a" style="left:0;top:556.28px;width:991px;height:20.53px;background:#fffde3;border-bottom:1px solid #e8e8e8"></div>
<div class="a" style="left:0;top:560.5px;width:991px;height:11.5px;background:#fff"></div>
<div class="a" style="left:14.3px;top:563.2px;width:922.7px;height:6.6px;background:#c9c9c9;border-radius:3px"></div>
<div class="a" style="left:991px;top:0;width:12px;height:572px;background:#fff"></div>
<div class="a" style="left:993.9px;top:14.299999999999997px;width:6.2px;height:11.4px;background:#c9c9c9;border-radius:3px"></div>
<svg width="1024" height="648"><path d="M994.9 8.799999999999997 L996.85 6.900000000000006 L998.8 8.799999999999997 Z" fill="#d6d6d6"/><path d="M994.9 552 L996.85 553.9 L998.8 552 Z" fill="#d6d6d6"/><path d="M8.8 564.6 L6.6 566.5 L8.8 568.4 Z" fill="#d6d6d6"/><path d="M981.4 564.6 L983.6 566.5 L981.4 568.4 Z" fill="#d6d6d6"/></svg>
</div>
</body></html>
